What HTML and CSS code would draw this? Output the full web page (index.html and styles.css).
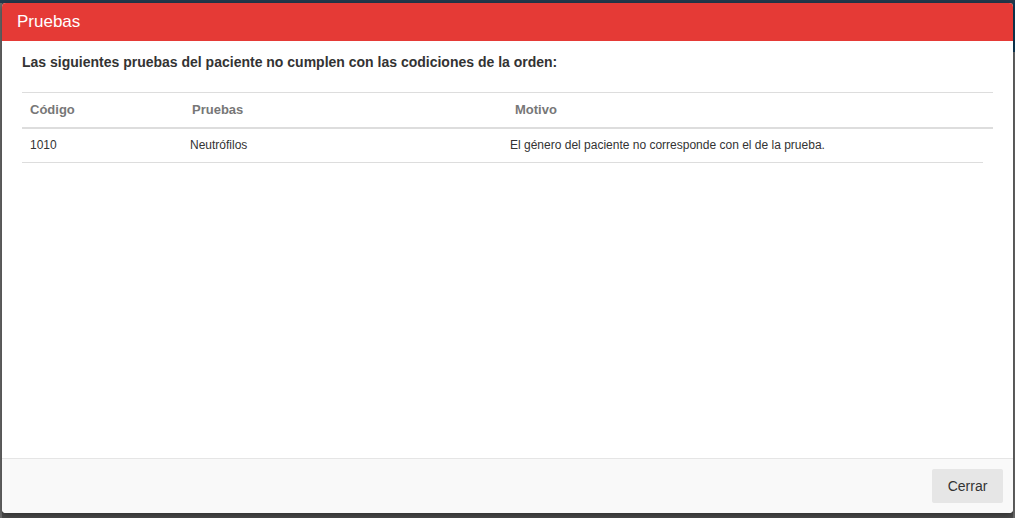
FILE: index.html
```html
<!DOCTYPE html>
<html lang="es">
<head>
<meta charset="utf-8">
<title>Pruebas</title>
<link rel="stylesheet" href="styles.css">
</head>
<body>
<div class="backdrop">
  <div class="modal">
    <div class="modal-header">Pruebas</div>
    <div class="modal-body">
      <p class="lead">Las siguientes pruebas del paciente no cumplen con las codiciones de la orden:</p>
      <table class="grid grid-head">
        <colgroup><col class="h1"><col class="h2"><col class="h3"></colgroup>
        <thead>
          <tr><th>Código</th><th>Pruebas</th><th>Motivo</th></tr>
        </thead>
      </table>
      <table class="grid grid-body">
        <colgroup><col class="b1"><col class="b2"><col class="b3"></colgroup>
        <tbody>
          <tr><td>1010</td><td>Neutrófilos</td><td>El género del paciente no corresponde con el de la prueba.</td></tr>
        </tbody>
      </table>
    </div>
    <div class="modal-footer">
      <button class="btn">Cerrar</button>
    </div>
  </div>
</div>
</body>
</html>
```

FILE: styles.css
```css
html, body {
  margin: 0;
  padding: 0;
  height: 100%;
}
body {
  background: #4b4b4b;
  font-family: "Liberation Sans", Arial, sans-serif;
  overflow: hidden;
}
.backdrop {
  height: 518px;
  padding: 3px 2px 0 2px;
  box-sizing: border-box;
  background:
    linear-gradient(#24394c, #24394c) top left / 100% 3px no-repeat,
    linear-gradient(#0e3a57, #0e3a57) right 0 top 0 / 2px 52px no-repeat,
    linear-gradient(#6a6a6a, #6a6a6a) right 0 top 52px / 2px 466px no-repeat,
    linear-gradient(#6a6a6a, #6a6a6a) left 0 top 0 / 2px 518px no-repeat,
    #4b4b4b;
}
.modal {
  width: 1011px;
  height: 510px;
  background: #fff;
  border-radius: 4px;
  display: flex;
  flex-direction: column;
  overflow: hidden;
  box-shadow: 0 2px 6px rgba(0,0,0,0.4);
}
.modal-header {
  height: 38px;
  background: #e53a36;
  color: #fff;
  font-size: 17px;
  line-height: 38px;
  padding-left: 15px;
  flex: none;
}
.modal-body {
  flex: 1;
  padding: 12px 20px 0 20px;
}
.lead {
  margin: 0 0 21px 0;
  font-size: 14px;
  line-height: 18px;
  font-weight: bold;
  color: #333;
}
.grid {
  border-collapse: collapse;
  table-layout: fixed;
}
.grid-head { width: 971px; }
.grid-body { width: 961px; }
.h1 { width: 162px; }
.h2 { width: 323px; }
.h3 { width: 486px; }
.b1 { width: 160px; }
.b2 { width: 320px; }
.b3 { width: 481px; }
.grid th {
  text-align: left;
  padding: 8px;
  font-size: 13px;
  line-height: 18px;
  font-weight: bold;
  color: #777;
  border-top: 1px solid #ddd;
  border-bottom: 2px solid #ddd;
}
.grid td {
  text-align: left;
  padding: 8px;
  font-size: 12px;
  line-height: 17px;
  color: #333;
  border-bottom: 1px solid #ddd;
}
.modal-footer {
  flex: none;
  height: 54px;
  border-top: 1px solid #e5e5e5;
  background: #f9f9f9;
  display: flex;
  justify-content: flex-end;
  align-items: center;
  padding-right: 10px;
}
.btn {
  width: 71px;
  height: 34px;
  border: none;
  border-radius: 2px;
  background: #e6e6e6;
  color: #333;
  font-family: "Liberation Sans", Arial, sans-serif;
  font-size: 14px;
  padding: 0;
}
```
